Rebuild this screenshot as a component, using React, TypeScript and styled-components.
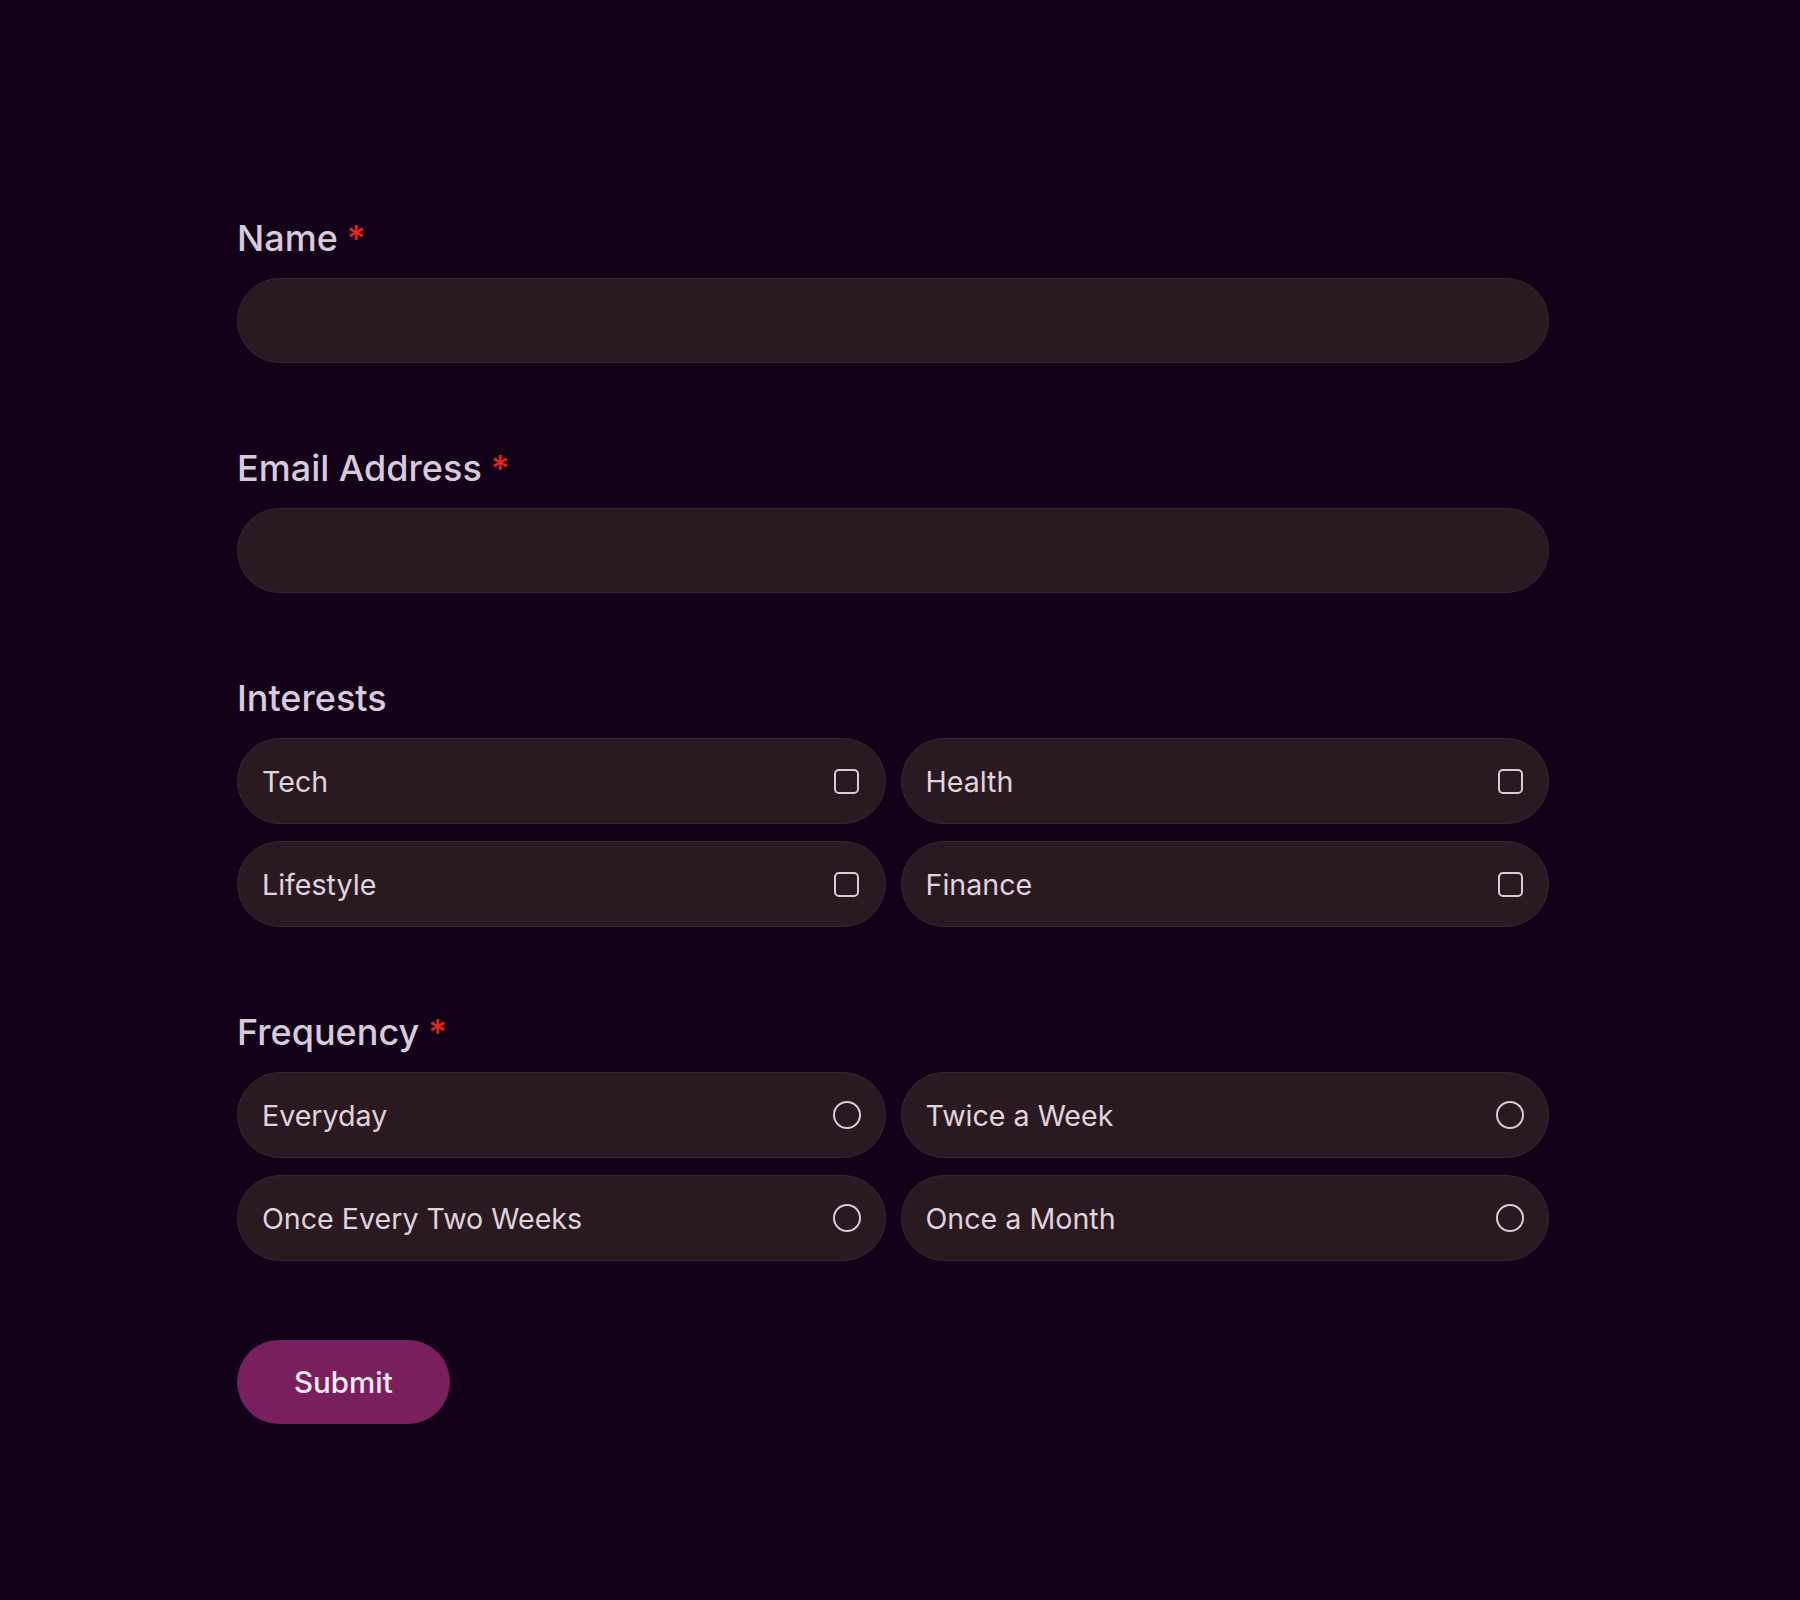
import React from "react";
import styled, { createGlobalStyle } from "styled-components";

const GlobalStyle = createGlobalStyle`
  html, body {
    margin: 0;
    padding: 0;
    background: #130019;
  }
  body {
    font-family: Inter, "Noto Sans", sans-serif;
    -webkit-font-smoothing: antialiased;
  }
  * { box-sizing: border-box; }
`;

const Page = styled.div`
  min-height: 1600px;
  background: #130019;
  padding: 216px 0 0 237px;
`;

const Form = styled.form`
  width: 1312px;
  display: flex;
  flex-direction: column;
  gap: 79px;
`;

const Fields = styled.div`
  display: flex;
  flex-direction: column;
  gap: 83px;
`;

const Field = styled.div`
  display: flex;
  flex-direction: column;
  gap: 18px;
`;

const Label = styled.label`
  font-family: Inter, "Noto Sans", sans-serif;
  font-size: 36px;
  line-height: 44px;
  font-weight: 500;
  color: #d9cadb;
  display: block;
`;

const Required = styled.span`
  color: #e8241c;
  margin-left: 9px;
`;

const TextInput = styled.input`
  height: 85px;
  width: 100%;
  border-radius: 999px;
  border: 1px solid #382731;
  background: #291a21;
  color: #e6dae2;
  font-family: Inter, "Noto Sans", sans-serif;
  font-size: 28px;
  padding: 0 28px;
  outline: none;
`;

const OptionGrid = styled.div`
  display: grid;
  grid-template-columns: 1fr 1fr;
  column-gap: 15px;
  row-gap: 17px;
`;

const Option = styled.label`
  height: 86px;
  border-radius: 999px;
  border: 1px solid #382731;
  background: #291a21;
  display: flex;
  align-items: center;
  justify-content: space-between;
  padding: 0 24px 0 24px;
  cursor: pointer;
`;

const OptionText = styled.span`
  font-family: Inter, "Noto Sans", sans-serif;
  font-size: 28.6px;
  font-weight: 400;
  color: #e0d3dc;
`;

const ControlSlot = styled.span`
  width: 28px;
  height: 28px;
  display: flex;
  align-items: center;
  justify-content: center;
`;

const Check = styled.input`
  appearance: none;
  margin: 0;
  width: 25px;
  height: 25px;
  border: 2px solid #d9cbd4;
  border-radius: 5px;
  background: transparent;
`;

const Radio = styled.input`
  appearance: none;
  margin: 0;
  width: 28px;
  height: 28px;
  border: 2px solid #d9cbd4;
  border-radius: 50%;
  background: transparent;
`;

const SubmitButton = styled.button`
  align-self: flex-start;
  height: 84px;
  padding: 0 57px;
  border: none;
  border-radius: 999px;
  background: #7a1f5e;
  color: #f7ecf4;
  font-family: Inter, "Noto Sans", sans-serif;
  font-size: 29.5px;
  font-weight: 500;
  cursor: pointer;
`;

const interests = ["Tech", "Health", "Lifestyle", "Finance"];
const frequencies = ["Everyday", "Twice a Week", "Once Every Two Weeks", "Once a Month"];

export default function App() {
  return (
    <>
      <GlobalStyle />
      <Page>
        <Form onSubmit={(e) => e.preventDefault()}>
          <Fields>
            <Field>
              <Label htmlFor="name">
                Name<Required>*</Required>
              </Label>
              <TextInput id="name" type="text" />
            </Field>
            <Field>
              <Label htmlFor="email">
                Email Address<Required>*</Required>
              </Label>
              <TextInput id="email" type="email" />
            </Field>
            <Field>
              <Label as="div">Interests</Label>
              <OptionGrid>
                {interests.map((item) => (
                  <Option key={item}>
                    <OptionText>{item}</OptionText>
                    <ControlSlot>
                      <Check type="checkbox" name="interests" value={item} />
                    </ControlSlot>
                  </Option>
                ))}
              </OptionGrid>
            </Field>
            <Field>
              <Label as="div">
                Frequency<Required>*</Required>
              </Label>
              <OptionGrid>
                {frequencies.map((item) => (
                  <Option key={item}>
                    <OptionText>{item}</OptionText>
                    <ControlSlot>
                      <Radio type="radio" name="frequency" value={item} />
                    </ControlSlot>
                  </Option>
                ))}
              </OptionGrid>
            </Field>
          </Fields>
          <SubmitButton type="submit">Submit</SubmitButton>
        </Form>
      </Page>
    </>
  );
}
